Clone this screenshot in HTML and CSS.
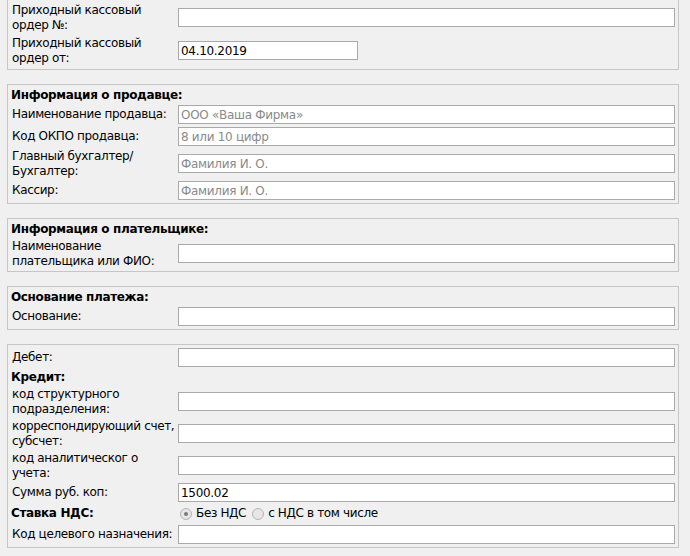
FILE: index.html
```html
<!DOCTYPE HTML>
<html>
<head>
<title>Приходный кассовый ордер</title>
<link rel="stylesheet" href="styles.css">
</head>
<body>
<form class="page">

<fieldset class="box first">
<div class="grid">
<label>Приходный кассовый ордер №:</label>
<input type="text">
<label>Приходный кассовый ордер от:</label>
<div><input type="text" class="date" value="04.10.2019"></div>
</div>
</fieldset>

<fieldset class="box">
<div class="grid">
<div class="title">Информация о продавце:</div>
<label>Наименование продавца:</label>
<input type="text" placeholder="ООО «Ваша Фирма»">
<label>Код ОКПО продавца:</label>
<input type="text" placeholder="8 или 10 цифр">
<label>Главный бухгалтер/ Бухгалтер:</label>
<input type="text" placeholder="Фамилия И. О.">
<label>Кассир:</label>
<input type="text" placeholder="Фамилия И. О.">
</div>
</fieldset>

<fieldset class="box">
<div class="grid">
<div class="title">Информация о плательщике:</div>
<label>Наименование плательщика или ФИО:</label>
<input type="text">
</div>
</fieldset>

<fieldset class="box">
<div class="grid">
<div class="title">Основание платежа:</div>
<label>Основание:</label>
<input type="text">
</div>
</fieldset>

<fieldset class="box">
<div class="grid">
<label>Дебет:</label>
<input type="text">
<div class="title">Кредит:</div>
<label>код структурного подразделения:</label>
<input type="text">
<label>корреспондирующий счет, субсчет:</label>
<input type="text">
<label>код аналитическог о учета:</label>
<input type="text">
<label>Сумма руб. коп:</label>
<input type="text" value="1500.02">
<div class="head">Ставка НДС:</div>
<div class="radios">
<label class="opt"><input type="radio" name="nds" checked> Без НДС</label>
<label class="opt"><input type="radio" name="nds"> с НДС в том числе</label>
</div>
<label>Код целевого назначения:</label>
<input type="text">
</div>
</fieldset>

</form>
</body>
</html>
```

FILE: styles.css
```css
html            {overflow: hidden; background: #f0f0f0;}
body            {margin: 0; font-family: "DejaVu Sans", Verdana, sans-serif; font-size: 12px; letter-spacing: -0.35px; color: #000;}
.page           {padding: 0 11px 0 7px;}

.box            {margin: 0 0 14px 0; padding: 3px; border: 1px solid #c6c6c6; min-width: 0;}
.box.first      {border-top: none; padding: 3px 3px 4px;}
.first .grid    {row-gap: 4px;}

.grid           {display: grid; grid-template-columns: 167px 1fr; column-gap: 0; row-gap: 3px; align-items: center;}
.grid label     {padding-left: 1px; line-height: 14.5px;}
.title          {grid-column: 1 / -1; font-weight: bold; line-height: 14px;}
.head           {font-weight: bold; line-height: 17px;}

.grid input[type=text] {box-sizing: border-box; width: 100%; height: 19px; margin: 0; padding: 0 2px;
                 border: 1px solid #a9a9a9; background: #fff; font: 12px "DejaVu Sans", Verdana, sans-serif;
                 letter-spacing: -0.3px; color: #000;}
.grid input.date {width: 180px; display: block;}
.grid input::placeholder {color: #8a8a8a;}

.radios         {display: flex; align-items: center; line-height: 17px;}
.radios .opt    {display: flex; align-items: center; padding: 0; margin-right: 4px;}
.radios input   {appearance: none; -webkit-appearance: none; box-sizing: border-box; width: 12px; height: 12px; margin: 0 4px 0 2px;
                 border: 1px solid #b4b4b4; border-radius: 50%; background: #e6e6e6; position: relative;}
.radios input:checked::after {content: ""; position: absolute; left: 3px; top: 3px; width: 4px; height: 4px; border-radius: 50%; background: #7a7a7a;}
```
